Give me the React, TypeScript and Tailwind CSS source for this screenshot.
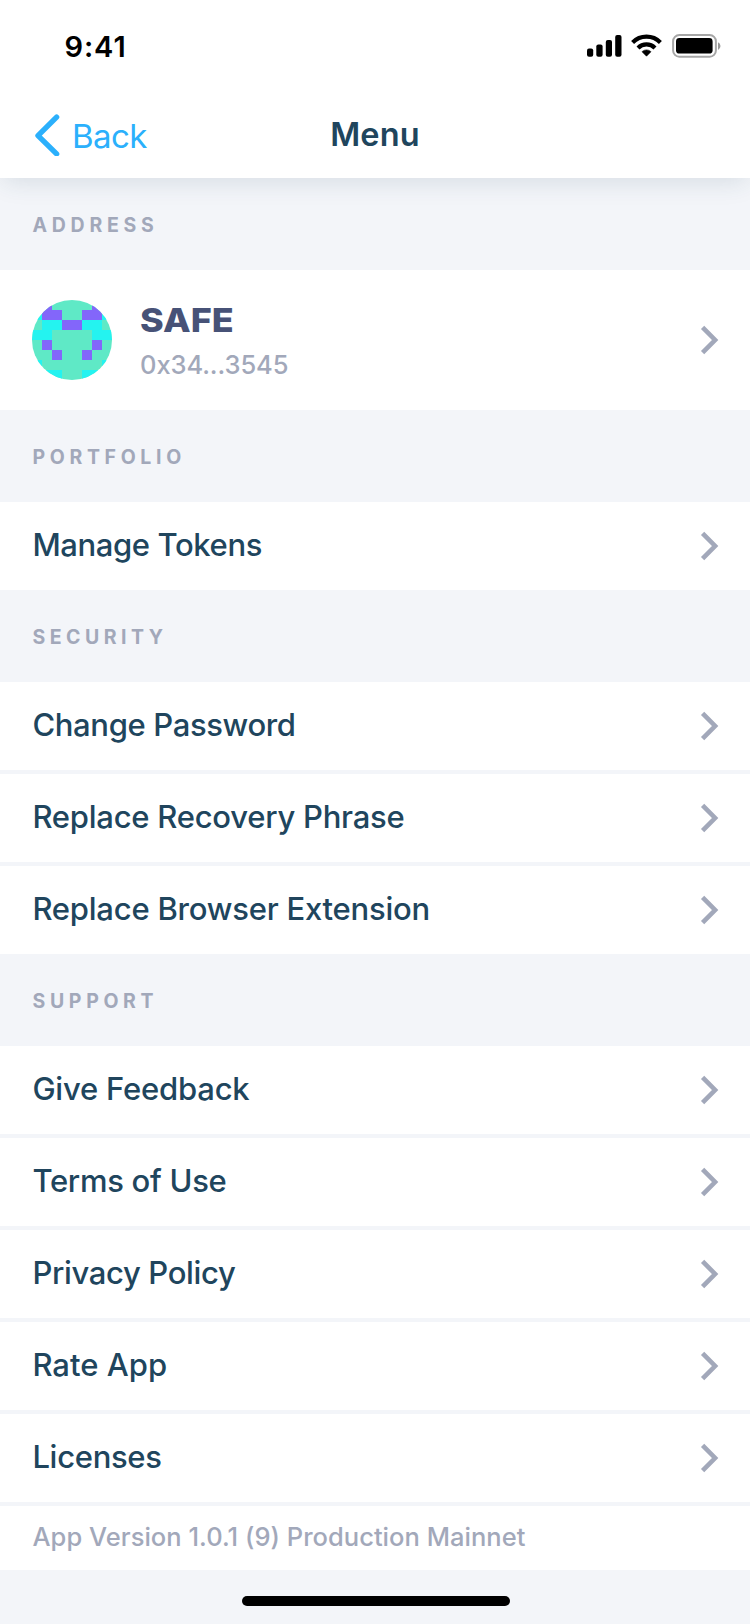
const palette: Record<string, string> = { c: "#24f3f0", p: "#8366fa" };

const blocky = [
  ".p....p.",
  "cpp..ppc",
  ".ccppcc.",
  "cc....cc",
  ".p....p.",
  "..p..p..",
  "c......c",
  "ccc..ccc",
];

function Avatar() {
  return (
    <svg width="80" height="80" viewBox="0 0 8 8" className="shrink-0 rounded-full bg-[#5fe9c6]" shapeRendering="crispEdges">
      {blocky.flatMap((row, y) =>
        [...row].map((cell, x) =>
          cell === "." ? null : <rect key={`${x}-${y}`} x={x} y={y} width="1" height="1" fill={palette[cell]} />,
        ),
      )}
    </svg>
  );
}

function Chevron() {
  return (
    <svg width="20" height="30" viewBox="0 0 20 30" fill="none" className="ml-auto shrink-0">
      <path d="M2.6 2.4 15.1 15 2.6 27.6" stroke="#a2a8ba" strokeWidth="4.6" strokeLinejoin="miter" />
    </svg>
  );
}

function SectionLabel({ text, tracking = "tracking-[4.65px]" }: { text: string; tracking?: string }) {
  return (
    <h2 className={`flex h-[92px] items-center pt-1 pl-[32.5px] text-[19.5px] font-bold text-[#a2a8ba] ${tracking}`}>
      {text}
    </h2>
  );
}

function Row({ text, tracking }: { text: string; tracking: string }) {
  return (
    <li className="flex h-[88px] items-center bg-white pr-[30px] pl-[32.4px]">
      <span className={`pb-px text-[31px] font-medium whitespace-nowrap ${tracking}`}>{text}</span>
      <Chevron />
    </li>
  );
}

function StatusBar() {
  return (
    <div className="flex h-[92px] items-center justify-between pr-[29px] pl-[64.5px]">
      <span className="pt-px text-[29px] font-semibold tracking-[0.9px] text-black">9:41</span>
      <svg width="136" height="26" viewBox="0 0 136 26" className="text-black">
        <g fill="currentColor">
          <rect x="2" y="15.5" width="6.2" height="8.3" rx="2" />
          <rect x="11.3" y="11.5" width="6.3" height="12.3" rx="2" />
          <rect x="20.8" y="7" width="6.2" height="16.8" rx="2" />
          <rect x="30.2" y="2" width="6.3" height="21.8" rx="2" />
        </g>
        <g fill="none" stroke="currentColor" strokeWidth="4.2">
          <path d="M47.6 9.4a19.6 19.6 0 0 1 27.8 0" />
          <path d="M53 15a12 12 0 0 1 17 0" />
        </g>
        <path fill="currentColor" d="M61.5 23.2 57 18.7a6.5 6.5 0 0 1 9 0Z" stroke="currentColor" strokeWidth="0.6" strokeLinejoin="round" />
        <rect x="88.1" y="2.1" width="42.8" height="21.6" rx="6.2" fill="none" stroke="#000" strokeOpacity="0.35" strokeWidth="2" />
        <rect x="91" y="5" width="36.6" height="15.6" rx="3.4" fill="currentColor" />
        <path d="M133 9.2a4.3 4.3 0 0 1 0 7.8Z" fillOpacity="0.4" />
      </svg>
    </div>
  );
}

function NavBar() {
  return (
    <div className="grid h-[86px] grid-cols-3 items-center">
      <a className="flex items-center pl-[33px] text-[#2bb0fc]">
        <svg width="28" height="42" viewBox="0 0 28 42" fill="none">
          <path d="M23.6 3.1 5 21.6l18.6 18.3" stroke="currentColor" strokeWidth="5.4" strokeLinecap="round" strokeLinejoin="round" />
        </svg>
        <span className="pt-[3px] pl-[11px] text-[33px] tracking-[-0.6px]">Back</span>
      </a>
      <h1 className="text-center text-[32.5px] font-semibold tracking-[0.1px]">Menu</h1>
    </div>
  );
}

export default function App() {
  return (
    <div className="flex h-[1624px] w-[750px] flex-col bg-[#f3f5f9] font-['Inter',sans-serif] text-[#20455d]">
      <header className="relative z-10 bg-white shadow-[0_6px_24px_-3px_rgba(32,69,93,0.14)]">
        <StatusBar />
        <NavBar />
      </header>
      <SectionLabel text="ADDRESS" tracking="tracking-[4.73px]" />
      <div className="flex h-[140px] items-center bg-white pr-[30px] pl-8">
        <Avatar />
        <div className="ml-7 flex flex-col gap-[5px] pt-1">
          <span className="origin-left scale-x-[1.09] text-[33px] leading-10 font-extrabold text-[#475277]">SAFE</span>
          <span className="text-[25.5px] leading-10 font-medium tracking-[-0.08px] text-[#a2a8ba]">0x34...3545</span>
        </div>
        <Chevron />
      </div>
      <SectionLabel text="PORTFOLIO" />
      <ul>
        <Row text="Manage Tokens" tracking="tracking-[-0.38px]" />
      </ul>
      <SectionLabel text="SECURITY" tracking="tracking-[4.5px]" />
      <ul className="flex flex-col gap-1">
        <Row text="Change Password" tracking="tracking-[-0.35px]" />
        <Row text="Replace Recovery Phrase" tracking="tracking-[-0.24px]" />
        <Row text="Replace Browser Extension" tracking="tracking-[-0.22px]" />
      </ul>
      <SectionLabel text="SUPPORT" />
      <ul className="flex flex-col gap-1">
        <Row text="Give Feedback" tracking="tracking-[-0.2px]" />
        <Row text="Terms of Use" tracking="tracking-[-0.28px]" />
        <Row text="Privacy Policy" tracking="tracking-[-0.35px]" />
        <Row text="Rate App" tracking="tracking-[0.04px]" />
        <Row text="Licenses" tracking="tracking-[-0.3px]" />
        <li className="flex h-16 items-center bg-white pb-px pl-[32.5px] text-[25.5px] font-medium tracking-[0.03px] text-[#a2a8ba]">
          App Version 1.0.1 (9) Production Mainnet
        </li>
      </ul>
      <footer className="flex flex-1 justify-center pt-[26px] pl-0.5">
        <div className="h-2.5 w-[268px] rounded-full bg-black" />
      </footer>
    </div>
  );
}
